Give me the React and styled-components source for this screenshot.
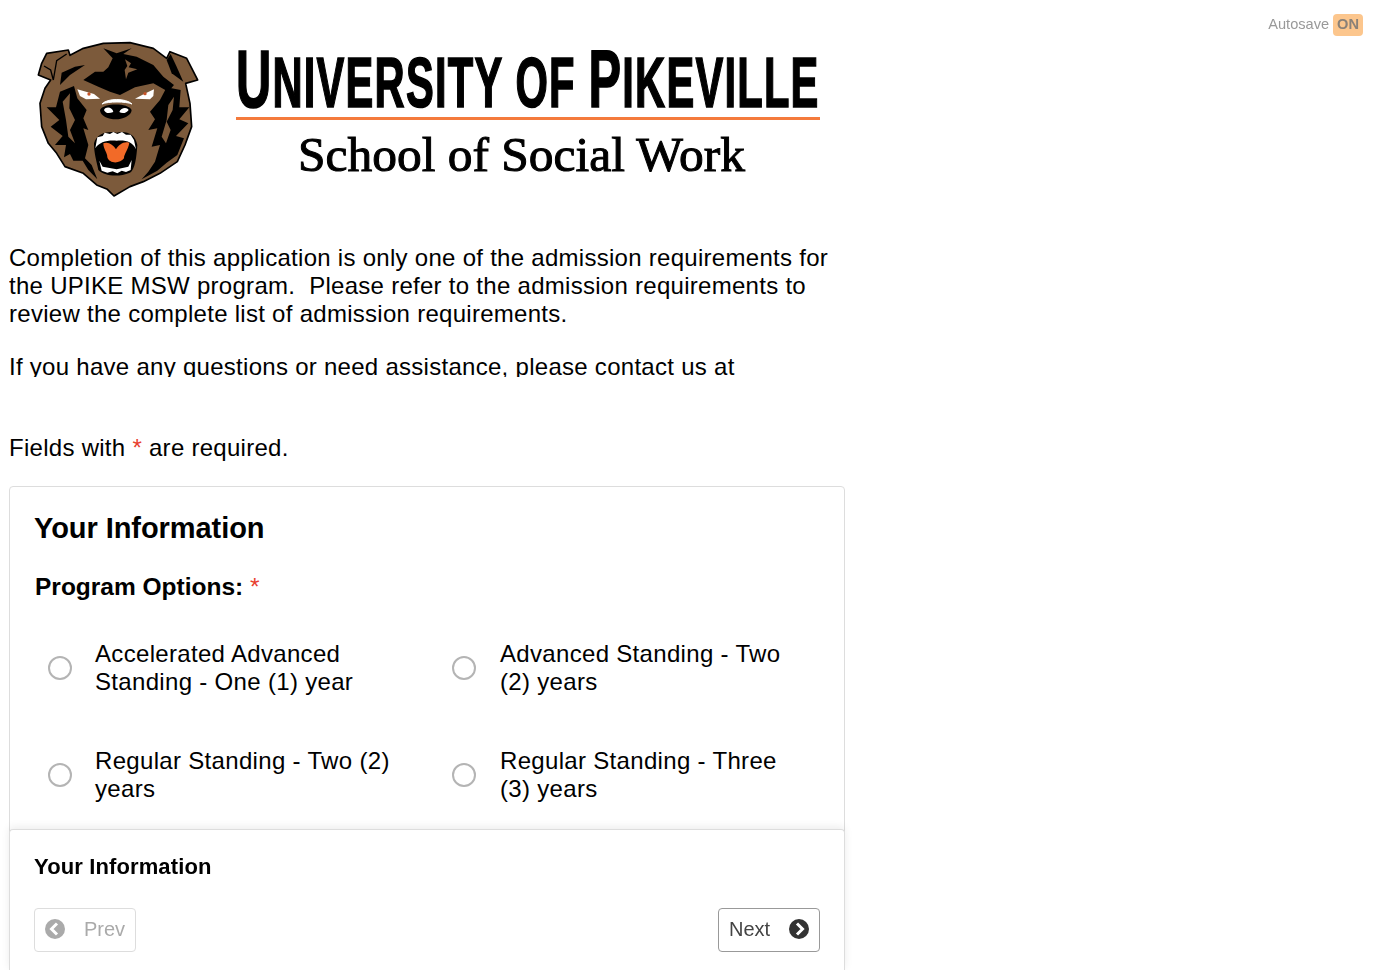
import React from "react";
import styled, { createGlobalStyle } from "styled-components";

const GlobalStyle = createGlobalStyle`
  html, body { margin: 0; padding: 0; height: 100%; overflow: hidden; background: #fff; }
  body { font-family: "Liberation Sans", Arial, sans-serif; color: #000; }
`;

const Page = styled.div`
  padding: 0 9px;
  width: 836px;
`;

const LogoSvg = styled.svg`
  display: block;
  width: 836px;
  height: 200px;
  margin-top: 20px;
  margin-bottom: 24px;
`;

const Description = styled.div`
  font-size: 24px;
  line-height: 28px;
  letter-spacing: 0.28px;
  max-height: 133px;
  overflow: hidden;
`;

const Paragraph = styled.p`
  margin: 0 0 25px;
`;

const RequiredNote = styled.p`
  font-size: 24px;
  line-height: 28px;
  letter-spacing: 0.28px;
  margin: 57px 0 24px;
`;

const Star = styled.span`
  color: #e8412f;
  font-weight: 400;
`;

const Card = styled.section`
  box-sizing: border-box;
  border: 1px solid #ddd;
  border-radius: 4px;
  padding: 24px 24px 0 25px;
  height: 484px;
`;

const Heading = styled.h2`
  margin: 0 0 0 -1px;
  font-size: 29px;
  line-height: 34px;
  font-weight: 700;
  letter-spacing: -0.06px;
`;

const FieldLabel = styled.div`
  margin-top: 28px;
  font-size: 24.5px;
  line-height: 28px;
  font-weight: 700;
`;

const OptionGrid = styled.div`
  display: grid;
  grid-template-columns: 404px 1fr;
  grid-auto-rows: 107px;
  margin-top: 26px;
`;

const Option = styled.label`
  display: flex;
  align-items: center;
  height: 56px;
  margin-top: 13px;
  &:nth-child(even) > span:last-child {
    margin-left: 24px;
  }
`;

const Radio = styled.span`
  box-sizing: border-box;
  flex: none;
  width: 24px;
  height: 24px;
  margin-left: 13px;
  border: 2px solid #b4b4b4;
  border-radius: 50%;
`;

const OptionText = styled.span`
  margin-left: 23px;
  width: 305px;
  font-size: 24px;
  line-height: 28px;
  letter-spacing: 0.32px;
`;

const Autosave = styled.div`
  position: fixed;
  top: 14px;
  right: 10px;
  display: flex;
  align-items: flex-start;
  gap: 4px;
  font-size: 14.6px;
  line-height: 21px;
  color: #999;
`;

const AutosaveBadge = styled.span`
  display: block;
  padding: 0 4px;
  height: 22px;
  line-height: 20px;
  border-radius: 4px;
  background: #fcc68d;
  color: #8a8178;
  font-weight: 700;
`;

const Footer = styled.footer`
  box-sizing: border-box;
  position: fixed;
  left: 9px;
  bottom: 0;
  width: 836px;
  height: 141px;
  padding: 24px 24px 0;
  background: #fff;
  border: 1px solid #ddd;
  border-bottom: 0;
  border-radius: 4px 4px 0 0;
  box-shadow: 0 -2px 8px rgba(0, 0, 0, 0.08);
`;

const FooterTitle = styled.div`
  font-size: 22px;
  line-height: 26px;
  font-weight: 700;
  letter-spacing: 0.12px;
`;

const FooterActions = styled.div`
  display: flex;
  justify-content: space-between;
  margin-top: 28px;
`;

const NavButton = styled.button`
  box-sizing: border-box;
  display: flex;
  align-items: center;
  justify-content: space-between;
  width: 102px;
  height: 44px;
  padding: 0 10px 2px;
  background: #fff;
  border: 1px solid ${(p) => (p.disabled ? "#ddd" : "#999")};
  border-radius: 4px;
  color: ${(p) => (p.disabled ? "#aaa" : "#444")};
  font-family: inherit;
  font-size: 20px;
`;

const ChevronCircle = ({ dir, color }) => (
  <svg width="20" height="20" viewBox="0 0 20 20">
    <circle cx="10" cy="10" r="10" fill={color} />
    <path
      d={dir === "left" ? "M12 4.5 6.5 10l5.500 5.500" : "M8 4.500 13.500 10 8 15.500"}
      fill="none"
      stroke="#fff"
      strokeWidth="3"
    />
  </svg>
);

const FUR = "#7c5a3b";

// bear head, drawn in 3x coordinates
const BearHead = () => (
  <g transform="translate(20 30) scale(0.3333)">
    {/* silhouette */}
    <path
      d="M80 70 145 60 150 76 190 55 250 40 330 38 400 55 440 85 450 65 500 85 533 150 497 160 510 220 515 290 495 345 472 395 420 430 370 455 330 470 282 498 262 478 230 465 190 430 135 410 110 370 85 340 65 290 60 220 75 175 92 150 55 135 65 100Z"
      fill={FUR}
      stroke="#000"
      strokeWidth="5"
      strokeLinejoin="round"
    />
    {/* ear lines */}
    <path d="M140 72 110 92 100 150 92 120 72 108" fill="none" stroke="#000" strokeWidth="4" />
    <path d="M452 72 470 110 490 155 455 130 440 90Z" fill="#000" />
    <path d="M458 78 495 92 524 146 495 148 478 108Z" fill={FUR} />
    {/* crown */}
    <path d="M250 55 290 70 335 55 310 72 350 80 400 105 430 140 462 165 445 185 400 160 345 172 300 195 270 185 235 170 190 150 225 125 250 125 265 112 278 85Z" fill="#000" />
    <path d="M315 88 333 100 326 112 352 118 325 128 318 148 314 120 322 108Z" fill={FUR} />
    <path d="M125 128 165 110 195 105 150 135 120 165Z" fill="#000" />
    {/* left cheek */}
    <path d="M120 185 162 168 172 205 200 240 190 265 205 300 190 295 205 345 195 385 215 405 232 448 205 420 188 392 160 392 150 372 132 382 138 345 105 345 128 318 92 290 118 270 80 232 108 232Z" fill="#000" />
    <path d="M128 215 150 190 148 235 165 270 150 300 165 340 145 320 138 270Z" fill={FUR} />
    {/* right cheek */}
    <path d="M482 180 440 172 420 210 390 245 405 268 385 300 412 295 395 350 420 345 405 395 385 425 365 448 412 422 440 398 472 375 492 325 468 318 505 280 478 268 508 232 478 232Z" fill="#000" />
    <path d="M445 225 462 200 458 240 440 275 452 300 438 340 425 320 440 270Z" fill={FUR} />
    {/* eyes */}
    <path d="M172 178 222 192 240 206 198 208 180 198Z" fill="#fff" />
    <path d="M402 178 372 192 345 206 390 208 400 198Z" fill="#fff" />
    <circle cx="207" cy="192" r="5" fill="#c8552a" />
    <circle cx="375" cy="191" r="5" fill="#c8552a" />
    {/* nose */}
    <path d="M246 222C262 204 318 204 336 222 318 214 264 214 246 222Z" fill="#fff" stroke="#fff" strokeWidth="3" />
    <path d="M240 240C250 218 325 218 335 240 335 258 305 268 288 268 265 268 240 258 240 240Z" fill="#000" />
    <path d="M252 240C258 228 278 232 280 246 266 252 256 250 252 240ZM298 246C302 232 322 230 326 240 320 250 306 252 298 246Z" fill="#fff" />
    {/* mouth */}
    <path d="M222 340C230 312 260 302 290 308 320 302 345 312 352 345 350 380 345 420 330 428 290 445 250 435 235 420 230 395 222 370 222 340Z" fill="#000" />
    <path d="M226 355 232 322 248 318 254 308 270 312 280 306 292 312 306 306 318 314 332 314 342 330 348 358C338 336 320 330 290 332 260 330 238 336 226 355Z" fill="#fff" />
    <path d="M238 392 248 410 290 418 325 410 335 390 332 420 318 426 305 422 292 430 278 424 262 428 245 422Z" fill="#fff" />
    <path d="M250 340C265 334 280 345 288 358 295 345 312 332 328 338 325 360 312 370 312 385 300 402 268 402 262 382 262 368 250 358 250 340Z" fill="#f26a28" />
  </g>
);

const Logo = () => (
  <LogoSvg viewBox="9 20 836 200" role="img">
    <BearHead />
    <g transform="translate(236 107) scale(0.596 1)">
      <text
        fontFamily="'Liberation Sans', sans-serif"
        fontWeight="700"
        fontSize="70"
        letterSpacing="2"
        stroke="#000"
        strokeWidth="1.6"
      >
        <tspan fontSize="82">U</tspan>NIVERSITY OF <tspan fontSize="82">P</tspan>IKEVILLE
      </text>
    </g>
    <rect x="236" y="117" width="584" height="3" fill="#f47a3c" />
    <text
      x="298"
      y="171"
      textLength="447"
      lengthAdjust="spacingAndGlyphs"
      fontFamily="'Liberation Serif', serif"
      fontSize="49"
      stroke="#000"
      strokeWidth="1"
    >
      School of Social Work
    </text>
  </LogoSvg>
);

const options = [
  "Accelerated Advanced Standing - One (1) year",
  "Advanced Standing - Two (2) years",
  "Regular Standing - Two (2) years",
  "Regular Standing - Three (3) years",
];

export default function App() {
  return (
    <>
      <GlobalStyle />
      <Autosave>
        Autosave <AutosaveBadge>ON</AutosaveBadge>
      </Autosave>
      <Page>
        <Logo />
        <Description>
          <Paragraph>
            Completion of this application is only one of the admission requirements for the UPIKE MSW
            program.&nbsp; Please refer to the admission requirements to review the complete list of
            admission requirements.
          </Paragraph>
          <Paragraph>If you have any questions or need assistance, please contact us at</Paragraph>
        </Description>
        <RequiredNote>
          Fields with <Star>*</Star> are required.
        </RequiredNote>
        <Card>
          <Heading>Your Information</Heading>
          <FieldLabel>
            Program Options: <Star>*</Star>
          </FieldLabel>
          <OptionGrid>
            {options.map((text) => (
              <Option key={text}>
                <Radio />
                <OptionText>{text}</OptionText>
              </Option>
            ))}
          </OptionGrid>
        </Card>
      </Page>
      <Footer>
        <FooterTitle>Your Information</FooterTitle>
        <FooterActions>
          <NavButton disabled>
            <ChevronCircle dir="left" color="#aaa" />
            Prev
          </NavButton>
          <NavButton>
            Next
            <ChevronCircle dir="right" color="#333" />
          </NavButton>
        </FooterActions>
      </Footer>
    </>
  );
}
